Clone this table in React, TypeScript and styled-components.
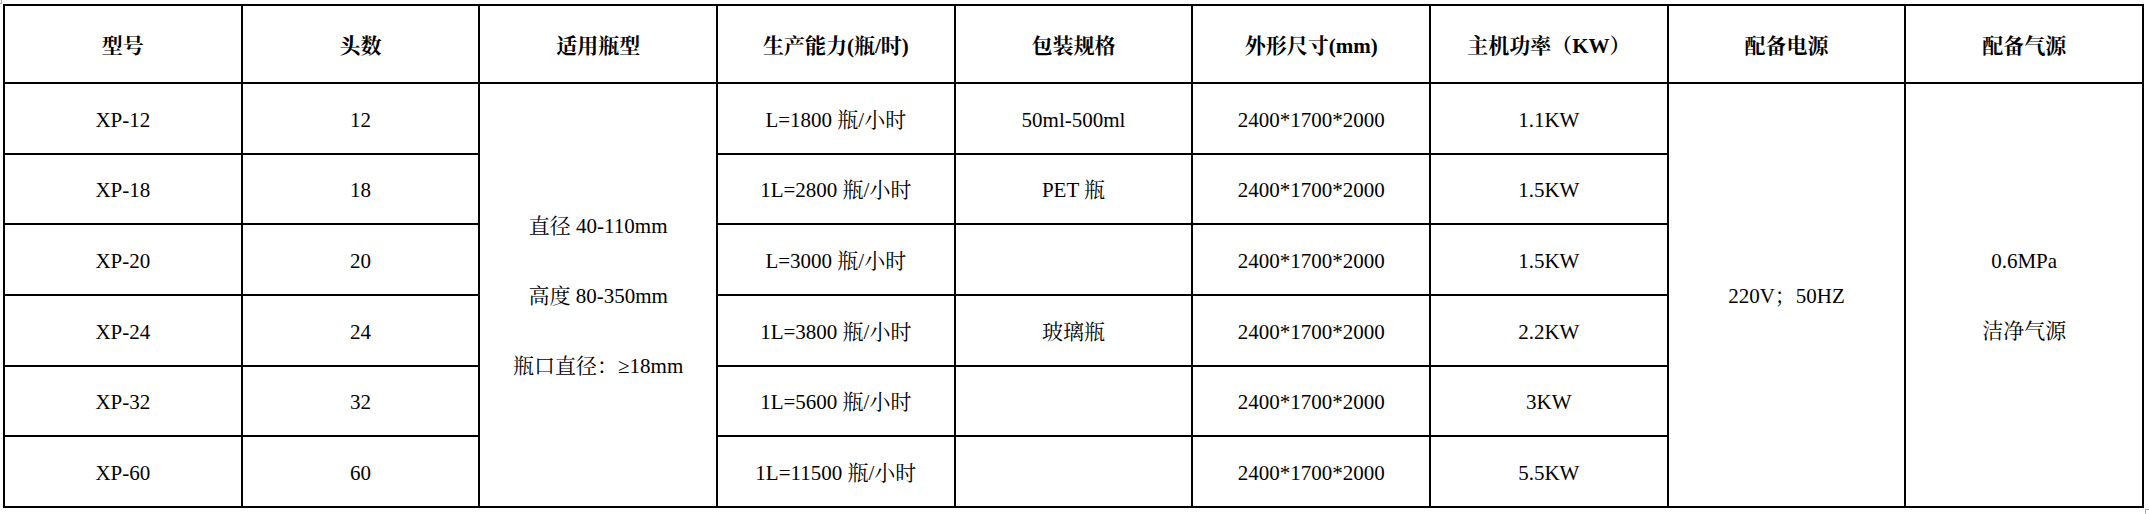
import React from "react";
import styled, { createGlobalStyle } from "styled-components";

const Global = createGlobalStyle`
  html, body { margin: 0; padding: 0; background: #fff; }
  body {
    font-family: "Liberation Serif", "Noto Serif CJK SC", "Noto Sans CJK SC", serif;
    color: #000;
  }
`;

const Page = styled.div`
  position: relative;
  width: 2149px;
  height: 514px;
  padding: 4px 0 0 3px;
  box-sizing: border-box;
`;

const Grid = styled.div`
  width: 2141px;
  height: 504px;
  box-sizing: border-box;
  display: grid;
  grid-template-columns: repeat(9, 1fr);
  grid-template-rows: 76px repeat(6, 1fr);
  gap: 2px;
  padding: 2px;
  background: #000;
`;

const Cell = styled.div<{ $rows?: number; $head?: boolean }>`
  background: #fff;
  display: flex;
  flex-direction: column;
  align-items: center;
  justify-content: center;
  text-align: center;
  box-sizing: border-box;
  padding-top: 3px;
  font-size: 21px;
  line-height: 28px;
  font-weight: ${(p) => (p.$head ? 700 : 400)};
  grid-row: ${(p) => (p.$rows ? `span ${p.$rows}` : "auto")};
  white-space: nowrap;
`;

const Lines = styled.div<{ $gap: number }>`
  display: flex;
  flex-direction: column;
  align-items: center;
  gap: ${(p) => p.$gap}px;
`;

const Mark = styled.div<{ $corner: "tl" | "br" }>`
  position: absolute;
  width: 4px;
  height: 5px;
  ${(p) =>
    p.$corner === "tl"
      ? `left: 0; top: 0; border-right: 1px solid #aaa; border-bottom: 1px solid #aaa; width: 1px; height: 3px;`
      : `left: 2145px; top: 509px; border-left: 1px solid #aaa; border-top: 1px solid #aaa;`}
`;

const headers = [
  "型号",
  "头数",
  "适用瓶型",
  "生产能力(瓶/时)",
  "包装规格",
  "外形尺寸(mm)",
  "主机功率（KW）",
  "配备电源",
  "配备气源",
];

const rows = [
  ["XP-12", "12", "L=1800 瓶/小时", "50ml-500ml", "2400*1700*2000", "1.1KW"],
  ["XP-18", "18", "1L=2800 瓶/小时", "PET 瓶", "2400*1700*2000", "1.5KW"],
  ["XP-20", "20", "L=3000 瓶/小时", "", "2400*1700*2000", "1.5KW"],
  ["XP-24", "24", "1L=3800 瓶/小时", "玻璃瓶", "2400*1700*2000", "2.2KW"],
  ["XP-32", "32", "1L=5600 瓶/小时", "", "2400*1700*2000", "3KW"],
  ["XP-60", "60", "1L=11500 瓶/小时", "", "2400*1700*2000", "5.5KW"],
];

export default function App() {
  return (
    <Page>
      <Global />
      <Mark $corner="tl" />
      <Grid>
        {headers.map((h) => (
          <Cell key={h} $head>
            {h}
          </Cell>
        ))}
        {rows.map((r, i) => (
          <React.Fragment key={r[0]}>
            <Cell>{r[0]}</Cell>
            <Cell>{r[1]}</Cell>
            {i === 0 && (
              <Cell $rows={6}>
                <Lines $gap={42}>
                  <span>直径 40-110mm</span>
                  <span>高度 80-350mm</span>
                  <span>瓶口直径：≥18mm</span>
                </Lines>
              </Cell>
            )}
            <Cell>{r[2]}</Cell>
            <Cell>{r[3]}</Cell>
            <Cell>{r[4]}</Cell>
            <Cell>{r[5]}</Cell>
            {i === 0 && (
              <>
                <Cell $rows={6}>220V；50HZ</Cell>
                <Cell $rows={6}>
                  <Lines $gap={42}>
                    <span>0.6MPa</span>
                    <span>洁净气源</span>
                  </Lines>
                </Cell>
              </>
            )}
          </React.Fragment>
        ))}
      </Grid>
      <Mark $corner="br" />
    </Page>
  );
}
